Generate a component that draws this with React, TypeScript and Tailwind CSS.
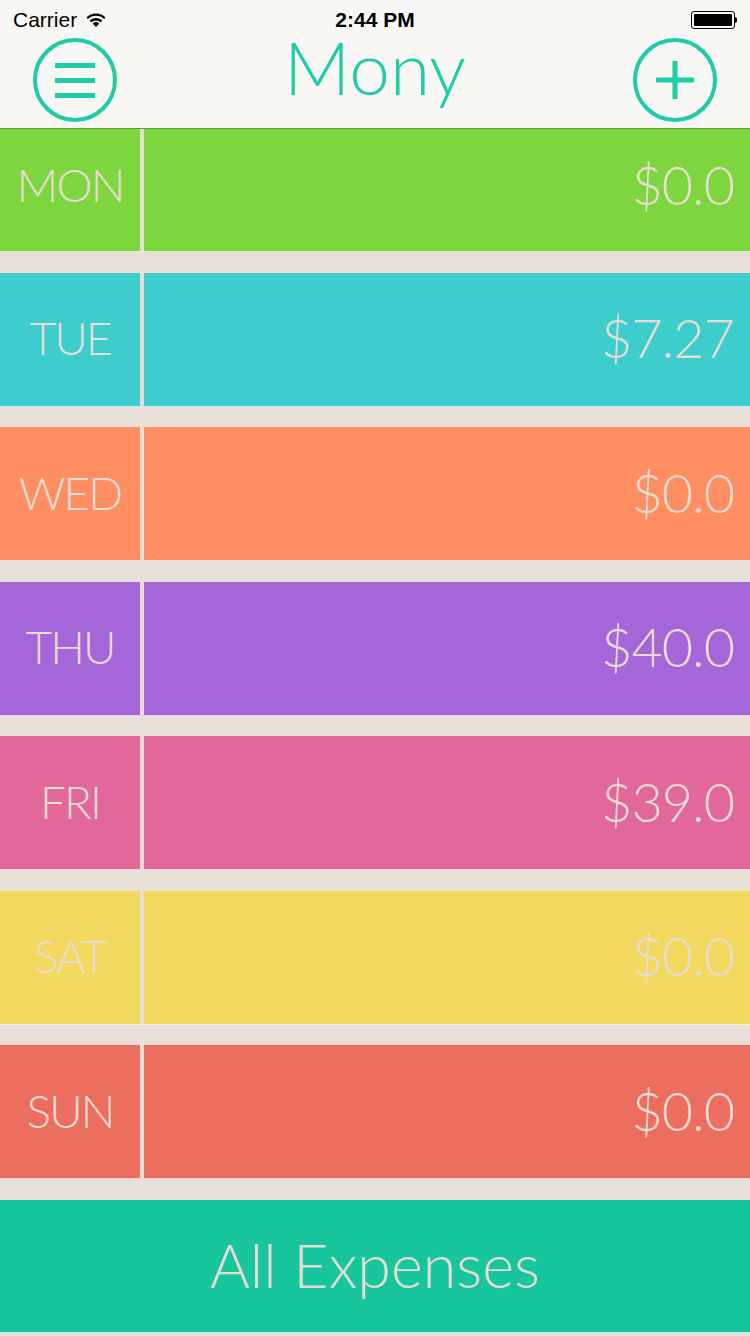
const days = [
  { day: 'MON', amount: '$0.0', bg: 'bg-[#7ed63e]' },
  { day: 'TUE', amount: '$7.27', bg: 'bg-[#3ecdcd]' },
  { day: 'WED', amount: '$0.0', bg: 'bg-[#ff8e62]' },
  { day: 'THU', amount: '$40.0', bg: 'bg-[#a466d8]' },
  { day: 'FRI', amount: '$39.0', bg: 'bg-[#e2689c]' },
  { day: 'SAT', amount: '$0.0', bg: 'bg-[#f2d95e]' },
  { day: 'SUN', amount: '$0.0', bg: 'bg-[#ed6e5e]' },
]

const font = { fontFamily: 'Lato, "Open Sans", sans-serif' }

function StatusBar() {
  return (
    <div className="relative flex h-10 items-center px-[13px] text-[21px] text-black" style={{ fontFamily: '"Liberation Sans", Arial, sans-serif' }}>
      <div className="flex items-center gap-2">
        <span>Carrier</span>
        <svg width="22" height="16" viewBox="0 0 22 16">
          <path d="M11 15 L7.6 11.4 A5 5 0 0 1 14.4 11.4 Z" fill="#000" />
          <path d="M4.6 8.6 A9.2 9.2 0 0 1 17.4 8.6 L15.8 10.3 A7 7 0 0 0 6.2 10.3 Z" fill="#000" />
          <path d="M1.4 5.4 A13.8 13.8 0 0 1 20.6 5.4 L19 7.1 A11.5 11.5 0 0 0 3 7.1 Z" fill="#000" />
        </svg>
      </div>
      <span className="absolute left-1/2 -translate-x-1/2 font-bold">2:44 PM</span>
      <div className="ml-auto flex items-center">
        <div className="h-[18px] w-[44px] rounded-[3px] border border-black p-[2px]">
          <div className="h-full w-full rounded-[1px] bg-black" />
        </div>
        <div className="h-[6px] w-[2px] rounded-r-sm bg-black" />
      </div>
    </div>
  )
}

function NavBar() {
  return (
    <div className="flex h-[88px] items-start justify-between px-[33px]">
      <button className="mt-[-2px] flex h-[84px] w-[84px] items-center justify-center rounded-full border-[4px] border-[#1fcca8]">
        <div className="flex flex-col gap-[10px]">
          <div className="h-[5px] w-[40px] bg-[#1fcca8]" />
          <div className="h-[5px] w-[40px] bg-[#1fcca8]" />
          <div className="h-[5px] w-[40px] bg-[#1fcca8]" />
        </div>
      </button>
      <h1 className="text-[73px] font-light leading-[54px] text-[#1fcca8]" style={font}>
        Mony
      </h1>
      <button className="mt-[-2px] flex h-[84px] w-[84px] items-center justify-center rounded-full border-[4px] border-[#1fcca8]">
        <svg width="42" height="42" viewBox="0 0 42 42">
          <path d="M21 2 V40 M2 21 H40" stroke="#1fcca8" strokeWidth="5" />
        </svg>
      </button>
    </div>
  )
}

export default function App() {
  return (
    <div className="flex min-h-[1336px] w-[750px] flex-col bg-[#e8e0d8]" style={font}>
      <div className="bg-[#f8f7f4]">
        <StatusBar />
        <NavBar />
      </div>
      <div className="flex flex-col gap-[20.5px]">
        {days.map((d, i) => (
          <div
            key={d.day}
            className={[
              'flex border-b border-white/70 text-[#e6dcd2]',
              d.bg,
              i === 0 ? 'h-[124px] border-t border-t-[#5fa533]' : 'h-[134px]',
            ].join(' ')}
          >
            <div
              className={[
                'flex w-[140px] items-center justify-center text-[46px] font-light tracking-[-2px]',
                i === 0 ? 'pb-[12px]' : 'pb-[3px]',
              ].join(' ')}
            >
              {d.day}
            </div>
            <div className="w-[4px] bg-[#e6ddd4]" />
            <div
              className={[
                'flex flex-1 items-center justify-end pr-[16px] text-[54px] font-light tracking-[-1px]',
                i === 0 ? 'pb-[12px]' : 'pb-[3px]',
              ].join(' ')}
            >
              {d.amount}
            </div>
          </div>
        ))}
        <button className="flex h-[133px] items-center justify-center border-b border-white/70 bg-[#17c69c] pb-[2px] text-[61px] font-light text-[#e6dcd2]">
          All Expenses
        </button>
      </div>
    </div>
  )
}
